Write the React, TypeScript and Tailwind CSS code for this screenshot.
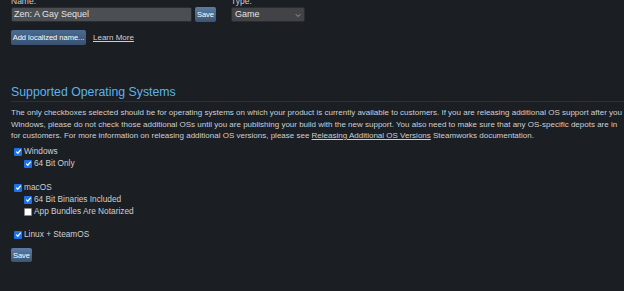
import React from 'react';

const Box = ({ checked }: { checked: boolean }) => (
  <span
    className={`inline-flex w-[8px] h-[8px] items-center justify-center shrink-0 rounded-[1px] ${checked ? 'bg-[#1a73e8]' : 'bg-white border border-[#8a8a8a]'}`}
  >
    {checked && (
      <svg viewBox="0 0 8 8" className="w-[7px] h-[7px]">
        <path d="M1.4 4.2 L3.2 6 L6.6 1.8" fill="none" stroke="white" strokeWidth="1.4" />
      </svg>
    )}
  </span>
);

const Check = ({ label, checked = true, indent = false }: { label: string; checked?: boolean; indent?: boolean }) => (
  <div className={`flex items-center gap-[2px] h-[12px] ${indent ? 'pl-[13px]' : 'pl-[3px]'}`}>
    <Box checked={checked} />
    <span className="text-[8.3px] text-[#cdd0d3]">{label}</span>
  </div>
);

export default function App() {
  return (
    <div className="w-[624px] h-[291px] overflow-hidden bg-[#1b1e23] text-[#cdd0d3] px-[11px]" style={{ fontFamily: '"Liberation Sans", Arial, sans-serif' }}>
      {/* Name / Type row */}
      <div className="flex gap-[15px] -mt-[5px]">
        <div>
          <p className="text-[8.5px] leading-[12px]">Name:</p>
          <div className="flex gap-[3px]">
            <div className="w-[181px] h-[15px] bg-[#4b4e53] border border-[#2a2c30] rounded-[2px] flex items-center px-[2px] text-[9px] text-[#e2e4e6]">Zen: A Gay Sequel</div>
            <button className="w-[21px] h-[15px] rounded-[2px] bg-gradient-to-b from-[#5a7da6] to-[#3b5575] text-[7.5px] text-white">Save</button>
          </div>
        </div>
        <div>
          <p className="text-[8.5px] leading-[12px]">Type:</p>
          <div className="w-[74px] h-[15px] bg-[#414347] border border-[#2a2c30] rounded-[2px] flex items-center justify-between px-[3px] text-[9px] text-[#e2e4e6]">
            <span>Game</span>
            <svg viewBox="0 0 8 8" className="w-[6px] h-[6px]"><path d="M1 3 L4 6 L7 3" fill="none" stroke="#b8babd" strokeWidth="1" /></svg>
          </div>
        </div>
      </div>

      <div className="flex items-center gap-[7px] mt-[8px]">
        <button className="w-[75px] h-[15px] rounded-[2px] bg-gradient-to-b from-[#4b6a90] to-[#3a5172] text-[7.5px] text-white whitespace-nowrap">Add localized name...</button>
        <a className="text-[8px] underline">Learn More</a>
      </div>

      {/* Supported OS */}
      <h2 className="mt-[39px] text-[12.3px] leading-[16px] text-[#5db3e8] pb-[1px] border-b border-[#2c3138] w-[700px]">Supported Operating Systems</h2>
      <div className="mt-[5px] text-[8px] leading-[11.5px] whitespace-nowrap">
        <p>The only checkboxes selected should be for operating systems on which your product is currently available to customers. If you are releasing additional OS support after you</p>
        <p>Windows, please do not check those additional OSs until you are publishing your build with the new support. You also need to make sure that any OS-specific depots are in</p>
        <p>for customers. For more information on releasing additional OS versions, please see <a className="underline">Releasing Additional OS Versions</a> Steamworks documentation.</p>
      </div>

      <div className="mt-[4px]">
        <Check label="Windows" />
        <Check label="64 Bit Only" indent />
        <div className="h-[12px]" />
        <Check label="macOS" />
        <Check label="64 Bit Binaries Included" indent />
        <Check label="App Bundles Are Notarized" checked={false} indent />
        <div className="h-[11px]" />
        <Check label="Linux + SteamOS" />
      </div>
      <button className="mt-[7px] w-[21px] h-[14px] rounded-[2px] bg-gradient-to-b from-[#5a7da6] to-[#3b5575] text-[7.5px] text-white">Save</button>
    </div>
  );
}
